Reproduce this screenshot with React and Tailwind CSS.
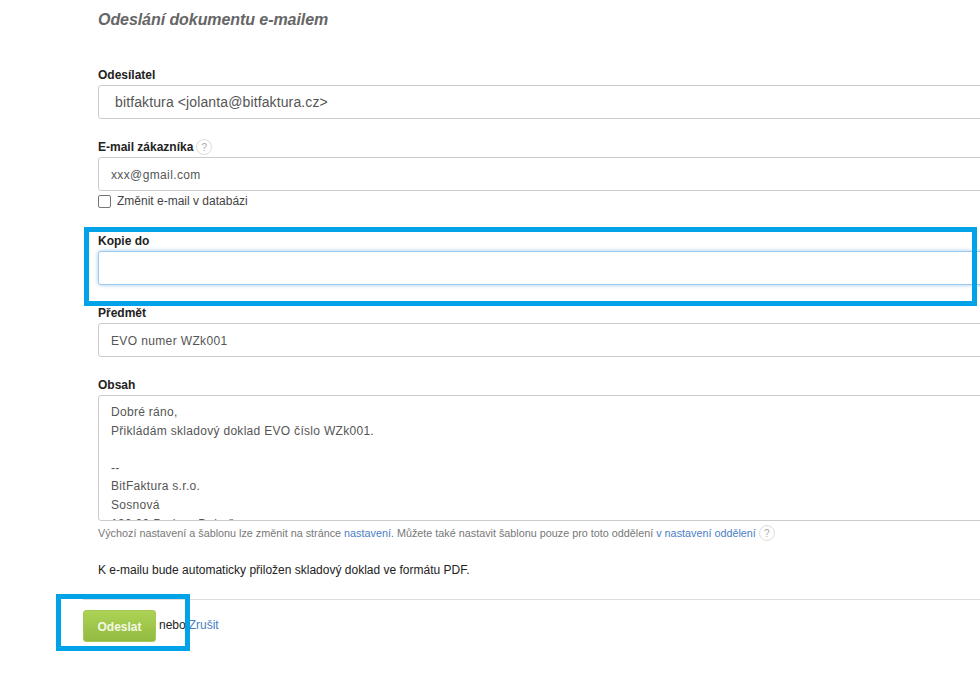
const inputBase = "w-[1000px] h-[34px] border border-[#cccccc] rounded-[3px] bg-white text-[#555555] outline-none";

function Help() {
  return (
    <span className="inline-flex items-center justify-center w-[16px] h-[16px] rounded-full border border-[#dddddd] text-[10px] font-normal text-[#aaaaaa]">
      ?
    </span>
  );
}

export default function App() {
  return (
    <div className="relative w-[980px] h-[682px] overflow-hidden bg-white font-['Liberation_Sans',Arial,sans-serif] text-[#222222]">
      <div className="pl-[98px] pt-[11px]">
        <h2 className="text-[16px] leading-[18px] font-bold italic tracking-[-0.07px] text-[#666666]">Odeslání dokumentu e-mailem</h2>

        <label className="block mt-[39px] mb-[3px] text-[12px] leading-[14px] font-bold">Odesílatel</label>
        <div className={inputBase + " flex items-center pl-[16px] text-[14px] tracking-[0.12px]"}>bitfaktura &lt;jolanta@bitfaktura.cz&gt;</div>

        <label className="flex items-center gap-[3px] mt-[20px] mb-[2px] h-[16px] text-[12px] font-bold">
          E-mail zákazníka <Help />
        </label>
        <input className={inputBase + " px-[12px] pt-[2px] text-[12px] tracking-[0.37px]"} defaultValue="xxx@gmail.com" />
        <label className="flex items-center gap-[6px] mt-[3px] h-[14px] text-[12px] text-[#444444]">
          <span className="w-[13px] h-[13px] border border-[#767676] rounded-[2px] bg-white"></span>
          Změnit e-mail v databázi
        </label>

        <label className="block mt-[26px] mb-[3px] text-[12px] leading-[14px] font-bold">Kopie do</label>
        <input className="w-[1000px] h-[34px] border border-[#9ecaed] rounded-[3px] bg-white outline-none shadow-[0_0_4px_#9ecaed]" />

        <label className="block mt-[21px] mb-[3px] text-[12px] leading-[14px] font-bold">Předmět</label>
        <input className={inputBase + " px-[12px] pt-[2px] text-[12px] tracking-[0.37px]"} defaultValue="EVO numer WZk001" />

        <label className="block mt-[21px] mb-[3px] text-[12px] leading-[14px] font-bold">Obsah</label>
        <textarea
          readOnly
          className="block w-[1000px] h-[126px] border border-[#cccccc] rounded-[3px] bg-white px-[12px] pt-[7px] pb-[5px] text-[12px] leading-[18.6px] tracking-[0.3px] text-[#555555] outline-none resize-none overflow-hidden"
          defaultValue={"Dobré ráno,\nPřikládám skladový doklad EVO číslo WZk001.\n\n--\nBitFaktura s.r.o.\nSosnová\n130 00 Praha - Dubeč"}
        />
        <p className="flex items-center gap-[3px] mt-[4px] h-[16px] text-[10.8px] text-[#777777] whitespace-nowrap">
          <span>
            Výchozí nastavení a šablonu lze změnit na stránce <a className="text-[#4a80c4]">nastavení</a>. Můžete také nastavit šablonu pouze pro toto oddělení <a className="text-[#4a80c4]">v nastavení oddělení</a>
          </span>
          <Help />
        </p>
        <p className="mt-[21px] text-[12px] leading-[16px] text-[#222222]">K e-mailu bude automaticky přiložen skladový doklad ve formátu PDF.</p>
      </div>

      <div className="ml-[83px] mt-[21px] border-t border-[#dddddd] pt-[10px] flex items-center text-[12px]">
        <button className="w-[73px] h-[32px] pt-[2px] rounded-[3px] border border-[#a3c95a] bg-gradient-to-b from-[#add355] to-[#93bb42] text-[12px] font-bold text-[#f4f9e4]">Odeslat</button>
        <span className="ml-[3px] mb-[2px]">nebo</span>
        <a className="ml-[3px] mb-[2px] text-[#4a80c4]">Zrušit</a>
      </div>

      <div className="absolute left-[84px] top-[227px] w-[893px] h-[79px] border-[5px] border-[#00a2e8]"></div>
      <div className="absolute left-[56px] top-[594px] w-[134px] h-[57px] border-[5px] border-[#00a2e8]"></div>
    </div>
  );
}
